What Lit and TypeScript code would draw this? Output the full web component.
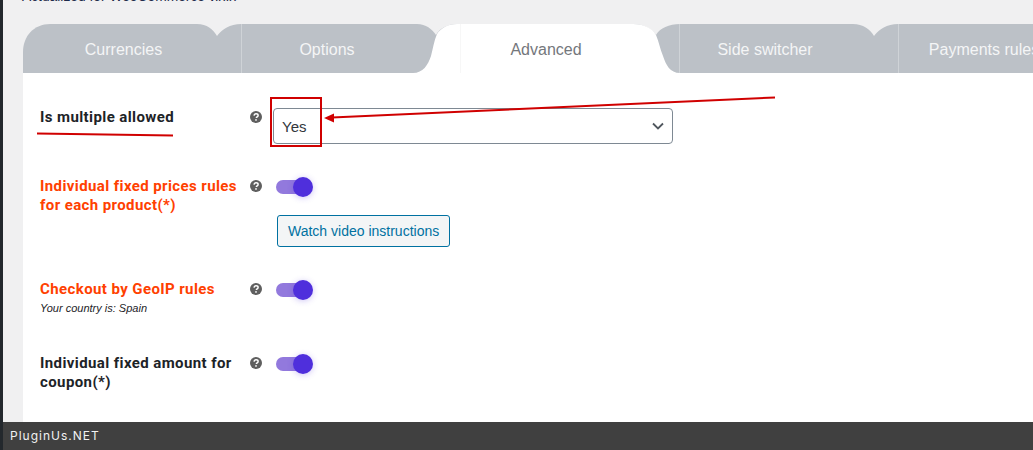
import { LitElement, html, css, svg } from 'lit';
import { customElement } from 'lit/decorators.js';

const TABS = ['Currencies', 'Options', 'Advanced', 'Side switcher', 'Payments rules'];

const helpIcon = html`<svg class="help" viewBox="0 0 12 12" width="12" height="12">
  <circle cx="6" cy="6" r="6" fill="#5f5f5f"></circle>
  <path d="M4 4.6c.1-1.2 1-1.8 2.1-1.8 1.2 0 2 .7 2 1.6 0 .8-.5 1.2-1.1 1.6-.5.3-.6.5-.6 1" fill="none" stroke="#fff" stroke-width="1.5"></path>
  <rect x="5.2" y="8.2" width="1.6" height="1.5" fill="#fff"></rect>
</svg>`;

@customElement('app-toggle')
export class AppToggle extends LitElement {
    static styles = css`
    :host {
      display: block;
      width: 40px;
      height: 20px;
    }

    .track {
      display: flex;
      justify-content: flex-end;
      align-items: center;
      width: 34px;
      height: 14px;
      margin: 3px 0 0 3px;
      border-radius: 7px;
      background: #9279dd;
    }

    .thumb {
      flex: none;
      width: 20px;
      height: 20px;
      margin-right: -3px;
      border-radius: 50%;
      background: #4f2fdc;
      box-shadow: 0 1px 6px rgba(79, 47, 220, 0.28);
    }
  `;

    render() {
        return html`<div class="track"><div class="thumb"></div></div>`;
    }
}

@customElement('app-root')
export class AppRoot extends LitElement {
    static styles = css`
    :host {
      display: block;
      width: 1033px;
      height: 450px;
      overflow: hidden;
      font-family: 'Liberation Sans', Arial, sans-serif;
    }

    .page {
      display: flex;
      flex-direction: column;
      height: 450px;
      box-sizing: border-box;
      border-left: 3px solid #23282d;
      background: #f0f0f1;
      position: relative;
      overflow: hidden;
    }

    .note {
      height: 24px;
      padding-left: 19px;
      margin-top: -10px;
      padding-bottom: 10px;
      font-size: 13.8px;
      line-height: 13px;
      color: #1d2a4a;
    }

    .wrap {
      flex: 1;
      min-height: 0;
      margin-left: 20px;
      width: 1100px;
    }

    .tabs {
      position: relative;
      display: flex;
      height: 49px;
    }

    .tabs svg {
      position: absolute;
      left: 0;
      top: 0;
    }

    .tab {
      position: relative;
      flex: none;
      width: 219px;
      box-sizing: border-box;
      padding-right: 48px;
      text-align: center;
      line-height: 51px;
      font-size: 16px;
      color: #f4f5f6;
      border-left: 1px solid #cfd3d7;
    }

    .tab:first-of-type {
      width: 218px;
      padding-right: 17px;
      border-left: 0;
    }

    .tab.active {
      color: #74777c;
      border-left-color: #f7f7f7;
    }

    .panel {
      background: #fff;
      height: 349px;
      box-sizing: border-box;
      padding: 35px 0 0 17px;
    }

    .row {
      display: grid;
      grid-template-columns: 210px 23px 420px;
      align-items: start;
    }

    .row.first {
      height: 69px;
    }

    .row.second {
      height: 103px;
    }

    .row.second app-toggle {
      margin-top: 1px;
    }

    .row.third {
      height: 74px;
    }

    .label {
      font-family: Roboto, 'Liberation Sans', sans-serif;
      font-weight: 700;
      font-size: 15px;
      line-height: 19px;
      letter-spacing: 0.4px;
      color: #1d2327;
    }

    .label.hot {
      color: #ff4000;
    }

    .label small {
      display: block;
      margin-top: 2px;
      font-family: 'Liberation Sans', Arial, sans-serif;
      font-weight: 400;
      font-style: italic;
      font-size: 11px;
      line-height: 14px;
      letter-spacing: 0;
      color: #1d2327;
    }

    .help {
      display: block;
      margin-top: 3px;
    }

    .select {
      display: flex;
      align-items: center;
      justify-content: space-between;
      width: 400px;
      height: 36px;
      box-sizing: border-box;
      padding: 0 8px;
      border: 1px solid #7e8993;
      border-radius: 4px;
      font-size: 15px;
      color: #32373c;
    }

    .button {
      display: inline-block;
      margin: 15px 0 0 4px;
      padding: 0 10px;
      height: 32px;
      box-sizing: border-box;
      border: 1px solid #0071a1;
      border-radius: 3px;
      background: #f3f5f6;
      color: #0071a1;
      font-size: 14px;
      line-height: 30px;
    }

    .marks {
      position: absolute;
      left: -3px;
      top: 0;
      pointer-events: none;
    }

    .footer {
      position: absolute;
      left: -3px;
      right: 0;
      bottom: 0;
      height: 28px;
      padding-left: 10px;
      background: #404040;
      color: #f2f2f2;
      font-family: Inter, Roboto, sans-serif;
      font-size: 12px;
      letter-spacing: 1px;
      line-height: 27px;
    }
  `;

    renderTabShape() {
        return svg`<svg width="1010" height="49" viewBox="0 0 1010 49">
      <path d="M0 49V28C0 12 11 0 27 0H1010V49Z" fill="#bcc1c7"></path>
      <path d="M174 0C184 0 190 5 194 12C199 5 207 0 218 0Z" fill="#f0f0f1"></path>
      <path d="M830 0C840 0 847 5 851 12C856 5 864 0 875 0Z" fill="#f0f0f1"></path>
      <path d="M394 0C403 0 409 5 413 11C417 4 425 0 434 0Z" fill="#f0f0f1"></path>
      <path d="M610 0C620 0 628 4 633 11C637 4 646 0 657 0Z" fill="#f0f0f1"></path>
      <path d="M390 49C400 49 405 41 408 32C410 24 411 17 414 10C418 4 425 0 434 0H610C621 0 629 4 633 11C636 18 637 25 640 32C643 41 647 49 657 49Z" fill="#fff"></path>
    </svg>`;
    }

    render() {
        return html`
      <div class="page">
        <div class="note">Actualized for WooCommerce v.x.x</div>
        <div class="wrap">
          <div class="tabs">
            ${this.renderTabShape()}
            ${TABS.map((t) => html`<div class="tab ${t === 'Advanced' ? 'active' : ''}">${t}</div>`)}
          </div>
          <div class="panel">
            <div class="row first">
              <div class="label">Is multiple allowed</div>
              ${helpIcon}
              <div class="select">
                <span>Yes</span>
                <svg width="12" height="8" viewBox="0 0 12 8"><path d="M1 1.5l5 5 5-5" fill="none" stroke="#50575e" stroke-width="1.8"></path></svg>
              </div>
            </div>
            <div class="row second">
              <div class="label hot">Individual fixed prices rules for each product(*)</div>
              ${helpIcon}
              <div>
                <app-toggle></app-toggle>
                <div class="button">Watch video instructions</div>
              </div>
            </div>
            <div class="row third">
              <div class="label hot">Checkout by GeoIP rules<small>Your country is: Spain</small></div>
              ${helpIcon}
              <app-toggle></app-toggle>
            </div>
            <div class="row">
              <div class="label">Individual fixed amount for coupon(*)</div>
              ${helpIcon}
              <app-toggle></app-toggle>
            </div>
          </div>
        </div>
        <svg class="marks" width="1033" height="450" viewBox="0 0 1033 450">
          <rect x="271" y="98" width="50" height="48" fill="none" stroke="#d00000" stroke-width="2"></rect>
          <path d="M775 97.5L332 117.5" stroke="#d00000" stroke-width="2" fill="none"></path>
          <path d="M324 118L334 113.5V122.5Z" fill="#d00000"></path>
          <path d="M37 133.5L173 135.5" stroke="#d00000" stroke-width="2" fill="none"></path>
        </svg>
        <div class="footer">PluginUs.NET</div>
      </div>
    `;
    }
}
